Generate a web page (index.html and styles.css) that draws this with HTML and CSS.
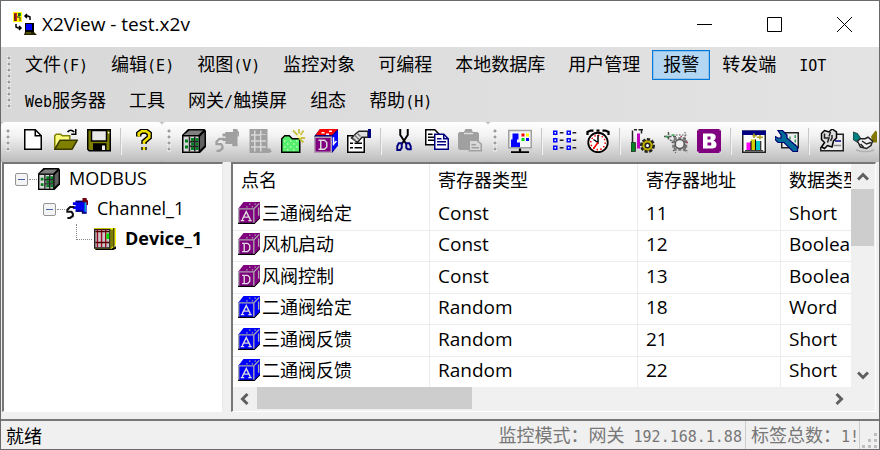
FILE: index.html
```html
<!DOCTYPE html>
<html lang="zh-CN">
<head>
  <meta charset="UTF-8">
  <meta name="viewport" content="width=device-width, initial-scale=1">
  <title>X2View - test.x2v</title>
  <link rel="stylesheet" href="styles.css">
</head>
<body>
  <!-- shared icons, all on a 16x16 grid -->
  <svg class="sprites" aria-hidden="true">
    <symbol id="i-server" viewBox="0 0 16 16">
      <path d="M0 4L4 0H15L16 1V12L12 16H0Z" fill="#000"/>
      <path d="M1 4L5 1H14L11 4Z" fill="#808080"/>
      <path d="M12 5L15 2V11L12 14Z" fill="#606060"/>
      <path d="M1 5H11V15H1Z" fill="#d8d8d8"/>
      <path d="M2 7h2v2H2zM2 11h2v2H2zM6 6h2v2H6zM9 6h2v2H9zM6 9h2v2H6zM9 9h2v2H9zM6 12h2v2H6zM9 12h2v2H9z" fill="#008020"/>
      <path d="M5 5V15M8.500 5V15M5 8.500H11M5 11.500H11" stroke="#222" stroke-width="1"/>
    </symbol>
    <symbol id="i-channel" viewBox="0 0 16 16">
      <path d="M7 2H13V1H15V11H12V10H7V8H5V6H7V5H5V3H7Z" fill="currentColor"/>
      <path d="M7 2.500H13M7 9.500H12V11H15" fill="none" stroke="var(--edge)"/>
      <path d="M6 6.500H3L1 8.500V10H4L5 11.500V13L3 14.500H1" fill="none" stroke="var(--wire)" stroke-width="1.500"/>
      <path d="M14 3V10" stroke="var(--trim)" stroke-width="1"/>
      <path d="M12 0h3v1l1 1v3h-1V3h-3z" fill="var(--cap)"/>
    </symbol>
    <symbol id="i-cube-a" viewBox="0 0 16 16">
      <path d="M0 5L4 0H16V11L12 16H0Z" fill="currentColor"/>
      <path d="M0 15H12L16 11V12L12 16H0Z" fill="#000"/>
      <path d="M.5 5H11.500V15M11.500 5L15.500 1M.5 5V15M15 4V10M6 3.500h1M8 1.500h1M10 3.500h1M12 1.500h1" fill="none" stroke="#a8a8a8"/>
      <path d="M2 13.500H4.500M7.500 13.500H10M3 13L6 7L9 13M4.500 11H7.500" fill="none" stroke="#ddd"/>
    </symbol>
    <symbol id="i-cube-d" viewBox="0 0 16 16">
      <path d="M0 5L4 0H16V11L12 16H0Z" fill="currentColor"/>
      <path d="M0 15H12L16 11V12L12 16H0Z" fill="#000"/>
      <path d="M.5 5H11.500V15M11.500 5L15.500 1M.5 5V15M15 4V10M6 3.500h1M8 1.500h1M10 3.500h1M12 1.500h1" fill="none" stroke="#a8a8a8"/>
      <path d="M3 7.500H7L8.500 9V12L7 13.500H3M4.500 7.500V13.500" fill="none" stroke="#ddd"/>
    </symbol>
  </svg>

  <div class="window">
    <header class="titlebar">
      <svg class="app-icon" viewBox="0 0 24 24" aria-hidden="true">
        <path d="M0 0H9V10H0Z" fill="#ffff00"/>
        <path d="M1 1H4V9H1Z" fill="#d02020"/><path d="M5 1H8V4H5Z" fill="#20a020"/>
        <path d="M2 2V9M4 5H7V9M6 1V4" fill="none" stroke="#222"/>
        <path d="M17 8V5L15 4H12M14 2L12 4L14 6M3 12V15L5 16H8M6 14L8 16L6 18" fill="none" stroke="#000" stroke-width="1.500"/>
        <path d="M12 11H21V20H12Z" fill="#000"/><path d="M13 12H19V18H13Z" fill="#0000ff"/>
        <path d="M12 20H21L24 23H11Z" fill="#222200"/><path d="M13 21H18" stroke="#808000"/>
      </svg>
      <h1>X2View - test.x2v</h1>
      <div class="caption-buttons">
        <button type="button" aria-label="最小化"><svg viewBox="0 0 15 15"><path d="M0 7.500H15"/></svg></button>
        <button type="button" aria-label="最大化"><svg viewBox="0 0 15 15"><path d="M.5 .5H14.500V14.500H.5Z"/></svg></button>
        <button type="button" aria-label="关闭"><svg viewBox="0 0 15 15"><path d="M0 0L15 15M15 0L0 15"/></svg></button>
      </div>
    </header>

    <nav class="menubar">
      <span class="grip"></span>
      <div class="menus">
        <div class="menu-row">
          <button type="button">文件<span class="half">(F)</span></button>
          <button type="button">编辑<span class="half">(E)</span></button>
          <button type="button">视图<span class="half">(V)</span></button>
          <button type="button">监控对象</button>
          <button type="button">可编程</button>
          <button type="button">本地数据库</button>
          <button type="button">用户管理</button>
          <button type="button" class="active">报警</button>
          <button type="button">转发端</button>
          <button type="button"><span class="half">IOT</span></button>
        </div>
        <div class="menu-row">
          <button type="button"><span class="half">Web</span>服务器</button>
          <button type="button">工具</button>
          <button type="button">网关<span class="half">/</span>触摸屏</button>
          <button type="button">组态</button>
          <button type="button">帮助<span class="half">(H)</span></button>
        </div>
      </div>
    </nav>

    <div class="toolbars">
      <div class="toolbar">
        <span class="grip"></span>
        <button type="button" aria-label="新建">
          <svg viewBox="0 0 16 16"><path d="M2.500 .5H9.500L13.500 4.500V13.500H2.500Z" fill="#fff" stroke="#000"/><path d="M9.500 .5V4.500H13.500" fill="none" stroke="#000"/></svg>
        </button>
        <button type="button" aria-label="打开">
          <svg viewBox="0 0 16 16"><path d="M.5 13V4.500L1.500 3.500H4.500L5.500 4.500H10.500V7" fill="#ffff80" stroke="#808000"/><path d="M.5 13.500L4 7.500H15.500L12 13.500Z" fill="#808000" stroke="#3a3a00"/><path d="M9 2Q11-.5 13.500 2M14.500 0V3.500H11.500" fill="none" stroke="#000"/></svg>
        </button>
        <button type="button" aria-label="保存">
          <svg viewBox="0 0 16 16"><path d="M.5 .5H15.500V14.500H1.500L.5 13.500Z" fill="#808000" stroke="#000"/><path d="M3 1H13V8H3Z" fill="#e8e8e8" stroke="#000"/><path d="M4 9.500H13V14.500H4Z" fill="#000"/><path d="M10 11h2v3h-2z" fill="#eee"/><path d="M14 2h1v1h-1z" fill="#fff"/></svg>
        </button>
        <span class="separator"></span>
        <button type="button" aria-label="帮助">
          <svg viewBox="0 0 16 16"><path d="M4.500 5V3L6.500 1.500H9.500L11.500 3V5.500L8 8.500V10M8 12V14" fill="none" stroke="#000" stroke-width="3.600"/><path d="M4.500 5V3L6.500 1.500H9.500L11.500 3V5.500L8 8.500V10M8 12V14" fill="none" stroke="#f0e000" stroke-width="1.800"/></svg>
        </button>
      </div>

      <div class="toolbar">
        <span class="grip"></span>
        <button type="button" aria-label="工程"><svg><use href="#i-server"/></svg></button>
        <button type="button" aria-label="通道" disabled><svg class="channel-off"><use href="#i-channel"/></svg></button>
        <button type="button" aria-label="设备" disabled>
          <svg viewBox="0 0 16 16"><path d="M1 0H13V13H15V14L16 15L14 16H1Z" fill="#a0a0a0"/><path d="M2 4H12M2 8H12M2 12H12M4.500 1V15M8.500 1V15" stroke="#d8d8d8"/><path d="M9 4h3v3H9z" fill="#a0a0a0"/></svg>
        </button>
        <button type="button" aria-label="新建组">
          <svg viewBox="0 0 16 16"><path d="M.5 15.500V6.500L2.500 4.500H5.500L7.500 6.500H12.500V15.500Z" fill="#55ef6c" stroke="#000"/><path d="M2 8h1M4 10h1M6 8h1M8 10h1M10 8h1M2 12h1M4 14h1M6 12h1M8 14h1M10 12h1" stroke="#b8ffc0"/><path d="M12 0V3M8 1L11 4M15 1L13 4M13 6H16M12 6L15 9" stroke="#c8c040" stroke-width="1.200"/><path d="M11 4h2v2h-2z" fill="#ffff90"/></svg>
        </button>
        <button type="button" aria-label="新建点">
          <svg viewBox="0 0 16 16"><path d="M0 5L4 0H16V11L12 16H0Z" fill="#000080"/><path d="M1 4L4 0H16L12 4Z" fill="#ff0000"/><path d="M5 2h2v1H5zM10 1h2v1h-2zM8 3h2v1H8z" fill="#fff"/><path d="M12 5L16 1V11L12 15Z" fill="#0000ff"/><path d="M13 5.500V11M13 10L15 8" stroke="#fff"/><path d="M.5 5.500H11.500V15.500H.5Z" fill="#800080" stroke="#b0a0b0"/><path d="M3 7.500H7L8.500 9V12L7 13.500H3M4.500 7.500V13.500" fill="none" stroke="#ddd"/></svg>
        </button>
        <button type="button" aria-label="属性">
          <svg viewBox="0 0 16 16"><path d="M.5 4.500H11.500V15.500H.5Z" fill="#fff" stroke="#000"/><path d="M2 9.500H4M5 9.500H10M2 12.500H4M5 12.500H10" stroke="#000"/><path d="M3 6L6 3L8 1.500H14V5.500H10L7 9L3 6Z" fill="#e0e0e0" stroke="#222"/><path d="M5 4L8 7M4 6L6 8M7 3L9 5" stroke="#777"/><path d="M14 0H16V6H14Z" fill="#000080"/></svg>
        </button>
        <span class="separator"></span>
        <button type="button" aria-label="剪切">
          <svg viewBox="0 0 16 16"><path d="M5.500 0V4L9.500 10M10.500 0V4L6.500 10" fill="none" stroke="#000" stroke-width="1.300"/><path d="M4.500 9.500H6.500V12.500L5.500 14H3.500L3.500 11.500ZM9.500 9.500H11.500L12.500 11.500V13.500H10.500L9.500 12.500Z" fill="none" stroke="#000080" stroke-width="1.300"/></svg>
        </button>
        <button type="button" aria-label="复制">
          <svg viewBox="0 0 16 16"><path d="M.5 .5H6.500L9.500 3.500V10.500H.5Z" fill="#fff" stroke="#000"/><path d="M2 3.500H5M2 5.500H7M2 7.500H7" stroke="#000"/><path d="M6.500 3.500H12.500L15.500 6.500V13.500H6.500Z" fill="#fff" stroke="#000080"/><path d="M12.500 3.500V6.500H15.500M8 6.500H11M8 8.500H14M8 10.500H14" fill="none" stroke="#000080"/></svg>
        </button>
        <button type="button" aria-label="粘贴" disabled>
          <svg viewBox="0 0 16 16"><path d="M0 3L1 2H4L5 0H9L10 2H13L14 3V14H1L0 13Z" fill="#a0a0a0"/><path d="M4 3H10" stroke="#ddd"/><path d="M7.500 7.500H12.500L15.500 10V14.500H7.500Z" fill="#d8d8d8" stroke="#a0a0a0"/><path d="M9 10.500H12M9 12.500H14" stroke="#a0a0a0"/></svg>
        </button>
      </div>

      <div class="toolbar">
        <span class="grip"></span>
        <button type="button" aria-label="监视">
          <svg viewBox="0 0 16 16"><path d="M.5 1H15.500V12.500H.5Z" fill="#f4f4f4" stroke="#a0a0a0"/><path d="M3 3H7V7H6V9H8V12H2V7H3Z" fill="#0000ff"/><path d="M9 3h2v2H9z" fill="#ff0000"/><path d="M12 3h2v2h-2z" fill="#ffff00"/><path d="M9 6h2v2H9z" fill="#00e000"/><path d="M12 6h2v2h-2z" fill="#0000ff"/><path d="M8 13V15M2 15.500H14" stroke="#000" stroke-width="1.500"/></svg>
        </button>
        <span class="separator"></span>
        <button type="button" aria-label="列表">
          <svg viewBox="0 0 16 16"><path d="M.5 1.500h2v2h-2zM9.500 1.500h2v2h-2zM.5 6.500h2v2h-2zM9.500 6.500h2v2h-2zM.5 11.500h2v2h-2zM9.500 11.500h2v2h-2z" fill="#fff" stroke="#0000ff"/><path d="M4.500 2.500H7M13 2.500H15.500M4.500 7.500H7M13 7.500H15.500M4.500 12.500H7M13 12.500H15.500" stroke="#222"/></svg>
        </button>
        <button type="button" aria-label="定时">
          <svg viewBox="0 0 16 16"><path d="M1 4V2L3 1H5M15 4V2L13 1H11M7 1H9" fill="none" stroke="#000" stroke-width="1.500"/><circle cx="8" cy="9" r="6.500" fill="#fff" stroke="#000" stroke-width="1.200"/><circle cx="8" cy="9" r="4.800" fill="none" stroke="#ff0000" stroke-dasharray="1 1.500"/><path d="M8 4V9L5 7" fill="none" stroke="#000"/><path d="M8 9L5 13" stroke="#f00"/></svg>
        </button>
        <span class="separator"></span>
        <button type="button" aria-label="配置">
          <svg viewBox="0 0 16 16"><path d="M2 .5H4M5 .5H8M7 0V3M1 1V9" stroke="#222"/><path d="M0 9H3V15H0Z" fill="#008020" stroke="#222" stroke-width=".5"/><path d="M4 3H6V13H4Z" fill="#c000c0"/><circle cx="11" cy="11" r="4" fill="#808000" stroke="#222" stroke-width="2" stroke-dasharray="2 1"/><circle cx="11" cy="11" r="3.300" fill="#c0b000"/><circle cx="11" cy="11" r="1.500" fill="#fff" stroke="#222"/></svg>
        </button>
        <button type="button" aria-label="模拟">
          <svg viewBox="0 0 16 16"><path d="M0 5H8M3 2V8M2 5L5 8" stroke="#555" stroke-dasharray="2 1"/><path d="M1 5h2M5 4h2" stroke="#30a050"/><path d="M6.500 6.500H14.500V13.500H6.500Z" fill="#ddd" stroke="#777" stroke-width="2" stroke-dasharray="2 1"/><circle cx="10.500" cy="10" r="3" fill="#eee" stroke="#555"/><path d="M8 4H16M14 2V15M5 9H7M6 14L8 16M15 14L16 16" stroke="#555" stroke-width=".7" stroke-dasharray="1 1"/><path d="M11 5h1M15 9h1" stroke="#b04060"/></svg>
        </button>
        <button type="button" aria-label="BACnet">
          <svg viewBox="0 0 16 16"><path d="M0 0H16V16H0Z" fill="#800080"/><path d="M4 3H9.500Q12.500 3 12.500 5.500Q12.500 7 11 7.700Q13 8.500 13 10.500Q13 13 10 13H4ZM7 5V7H9V5ZM7 9V11H9.500V9Z" fill="#fff" fill-rule="evenodd"/><path d="M0 0h1v1H0zM15 0h1v1h-1zM0 15h1v1H0zM15 15h1v1h-1z" fill="#ddd"/></svg>
        </button>
        <span class="separator"></span>
        <button type="button" aria-label="图表">
          <svg viewBox="0 0 16 16"><path d="M.5 1.500H15.500V15.500H.5Z" fill="#fff" stroke="#222"/><path d="M0 1H16V4H0Z" fill="#000080"/><path d="M3 9H6V14H3Z" fill="#ff00ff"/><path d="M6 7H9V14H6Z" fill="#d8d000"/><path d="M9 8H12V14H9Z" fill="#00c8c8"/><path d="M2 14.500H14M6 8V14M9 7V14M12.500 8V14" stroke="#000" stroke-width=".7"/><path d="M8 3V6M7 4.500H10M12 4V7M10 5.500H14" stroke="#b0a020"/></svg>
        </button>
        <button type="button" aria-label="工具">
          <svg viewBox="0 0 16 16"><path d="M4.500 2.500H15.500V12.500H4.500Z" fill="#eee" stroke="#222"/><path d="M10 5V8M13.500 4V11" stroke="#40a060" stroke-dasharray="2 1"/><path d="M2 1H5L8 4V6L15 12V15H12L6 9H2L0 7V5L2 6H4V4Z" fill="#006a98" stroke="#000070" stroke-width=".8"/></svg>
        </button>
        <span class="separator"></span>
        <button type="button" aria-label="用户">
          <svg viewBox="0 0 16 16"><path d="M5 3.500H15.500V14.500H.5V12" fill="#eee" stroke="#222"/><path d="M1 12L3 9L1 7V3L3 1L6 2L8 0L11 2V6L9 8L8 12L5 11L3 13Z" fill="#ddd" stroke="#000"/><path d="M3 3V6H6L5 9M7 2L6 5M8 4V6L7 8" fill="none" stroke="#222"/><path d="M10 8H14" stroke="#000080"/><path d="M9 11H14" stroke="#888"/></svg>
        </button>
        <button type="button" aria-label="协议">
          <svg viewBox="0 0 16 16"><path d="M0 2L3 3L5 6L3 9L0 7Z" fill="#008080" stroke="#222" stroke-width=".5"/><path d="M12 5L15 1L16 2V9H13Z" fill="#807800"/><path d="M3 8L5 6.500H8L10 5.500L13 8L12 11L9 13L5 12Z" fill="#f0f0f0" stroke="#222"/><path d="M6 8L9 10L12 9M5 10L7 12" fill="none" stroke="#222"/><path d="M2 14L6 15H11L14 14" fill="none" stroke="#b0b0b0"/></svg>
        </button>
      </div>
    </div>

    <main class="workspace">
      <ul class="tree">
        <li class="node">
          <button type="button" class="toggle" aria-label="折叠 MODBUS"></button>
          <span class="branch"></span>
          <svg class="icon"><use href="#i-server"/></svg>
          <span>MODBUS</span>
        </li>
        <li class="node level-1">
          <button type="button" class="toggle" aria-label="折叠 Channel_1"></button>
          <span class="branch"></span>
          <svg class="icon channel-on"><use href="#i-channel"/></svg>
          <span>Channel_1</span>
        </li>
        <li class="node level-2 selected">
          <span class="elbow"></span>
          <svg class="icon" viewBox="0 0 16 16">
            <path d="M0 0H15V14L16 13V15L14 16H1Z" fill="#000"/><path d="M0 0H14V14H15V0H16V12L13 15H0Z" fill="#ffff00"/>
            <path d="M12 1H14V13L12 15Z" fill="#808000"/><path d="M.5 1H11.500V14.500H.5Z" fill="#c8c8c8" stroke="#222"/>
            <path d="M2.500 1V14M5.500 1V14M8.500 1V14" stroke="#a00020"/><path d="M1 2.500H11M1 10.500H11" stroke="#500"/><path d="M9 4h2v4H9z" fill="#00e000"/>
          </svg>
          <span>Device_1</span>
        </li>
      </ul>

      <section class="list">
        <div class="list-view">
          <table>
            <colgroup><col class="col-name"><col class="col-register"><col class="col-address"><col class="col-data"></colgroup>
            <thead>
              <tr><th>点名</th><th>寄存器类型</th><th>寄存器地址</th><th>数据类型</th></tr>
            </thead>
            <tbody>
              <tr><td class="name"><svg class="icon virtual"><use href="#i-cube-a"/></svg>三通阀给定</td><td>Const</td><td>11</td><td>Short</td></tr>
              <tr><td class="name"><svg class="icon virtual"><use href="#i-cube-d"/></svg>风机启动</td><td>Const</td><td>12</td><td>Boolean</td></tr>
              <tr><td class="name"><svg class="icon virtual"><use href="#i-cube-d"/></svg>风阀控制</td><td>Const</td><td>13</td><td>Boolean</td></tr>
              <tr><td class="name"><svg class="icon analog"><use href="#i-cube-a"/></svg>二通阀给定</td><td>Random</td><td>18</td><td>Word</td></tr>
              <tr><td class="name"><svg class="icon analog"><use href="#i-cube-a"/></svg>三通阀反馈</td><td>Random</td><td>21</td><td>Short</td></tr>
              <tr><td class="name"><svg class="icon analog"><use href="#i-cube-a"/></svg>二通阀反馈</td><td>Random</td><td>22</td><td>Short</td></tr>
            </tbody>
          </table>
        </div>
        <div class="scrollbar vertical">
          <button type="button" aria-label="向上滚动"><svg viewBox="0 0 12 12"><path d="M1 8.500L6 3.500L11 8.500"/></svg></button>
          <span class="thumb"></span>
          <button type="button" aria-label="向下滚动"><svg viewBox="0 0 12 12"><path d="M1 3.500L6 8.500L11 3.500"/></svg></button>
        </div>
        <div class="scrollbar horizontal">
          <button type="button" aria-label="向左滚动"><svg viewBox="0 0 12 12"><path d="M8.500 1L3.500 6L8.500 11"/></svg></button>
          <span class="thumb"></span>
          <button type="button" aria-label="向右滚动"><svg viewBox="0 0 12 12"><path d="M3.500 1L8.500 6L3.500 11"/></svg></button>
        </div>
      </section>
    </main>

    <footer class="statusbar">
      <span class="ready">就绪</span>
      <span class="pane mode">监控模式：网关<span class="half"> 192.168.1.88</span></span>
      <span class="pane total">标签总数：<span class="half">1!</span></span>
      <svg class="size-grip" viewBox="0 0 16 16" aria-hidden="true"><path d="M12 0h3v3h-3zM6 6h3v3H6zM12 6h3v3h-3zM0 12h3v3H0zM6 12h3v3H6zM12 12h3v3h-3z" fill="#bfbfbf"/></svg>
    </footer>
  </div>
</body>
</html>
```
FILE: styles.css
```css
* {
  box-sizing: border-box;
}

body {
  margin: 0;
  background: #f0f0f0;
  color: #000;
  font-family: "Open Sans", "Noto Sans CJK SC", sans-serif;
  font-size: 18px;
}

button {
  margin: 0;
  padding: 0;
  border: 0;
  background: none;
  color: inherit;
  font: inherit;
}

h1 {
  margin: 0;
  font-size: 19px;
  font-weight: normal;
}

.sprites {
  display: none;
}

.window {
  display: flex;
  flex-direction: column;
  height: 100vh;
  border: 1px solid #6b696b;
  overflow: hidden;
}

/* title bar */
.titlebar {
  display: flex;
  align-items: center;
  flex: none;
  height: 46px;
  padding-left: 12px;
  background: #fff;
}

.app-icon {
  width: 24px;
  height: 24px;
  margin-right: 5px;
}

.caption-buttons {
  display: flex;
  margin-left: auto;
}

.caption-buttons button {
  width: 70px;
  height: 46px;
}

.caption-buttons svg {
  display: block;
  width: 15px;
  height: 15px;
  margin: auto;
  fill: none;
  stroke: #000;
}

/* menu */
.menubar,
.menu-row button,
.statusbar {
  font-family: "Noto Sans CJK SC", sans-serif;
}

.half {
  font-family: "DejaVu Sans Mono", monospace;
  font-size: 15px;
  white-space: pre;
}

.grip {
  flex: none;
  width: 4px;
  height: 24px;
  background: radial-gradient(circle at 2px 2px, #9c9c9c 1px, #f8f8f8 2px, transparent 3px) 0 0 / 4px 6px;
}

.menubar {
  display: flex;
  flex: none;
  padding: 3px 0 6px 6px;
  background: linear-gradient(90deg, #d8d8d8, #e3e3e3);
}

.menubar .grip {
  height: 54px;
  margin-top: 6px;
}

.menus {
  display: flex;
  flex-direction: column;
  gap: 6px;
  padding-left: 3px;
}

.menu-row {
  display: flex;
  gap: 1px;
}

.menu-row button {
  height: 30px;
  padding: 0 10px 4px;
  border: 1px solid transparent;
  line-height: 24px;
  white-space: nowrap;
}

.menu-row .active {
  border-color: #0078d7;
  background: #b3d7f3;
  outline: 1px solid #8fc3ee;
  outline-offset: -2px;
}

/* toolbars */
.toolbars {
  display: flex;
  flex: none;
  height: 40px;
  background: #b8b8b8;
  overflow: hidden;
}

.toolbar {
  display: flex;
  align-items: center;
  flex: none;
  padding: 0 2px 2px 5px;
  border-radius: 4px;
  background: linear-gradient(#fff, #f2f2f2 35%, #bcbcbc);
}

.toolbar:last-child {
  flex: 1 0 auto;
}

.toolbar .grip {
  margin-right: 6px;
}

.toolbar button {
  width: 33px;
  height: 32px;
}

.toolbar svg {
  display: block;
  width: 24px;
  height: 24px;
  margin: auto;
}

.separator {
  width: 2px;
  height: 27px;
  margin: 0 5px;
  background: linear-gradient(90deg, #c8c8c8 50%, #f4f4f4 50%);
}

.channel-off {
  color: #a0a0a0;
  --edge: #a0a0a0;
  --wire: #a0a0a0;
  --trim: #a0a0a0;
  --cap: #a0a0a0;
}

.channel-on {
  color: #0000ee;
  --edge: #000060;
  --wire: #111;
  --trim: #00b8c8;
  --cap: #700010;
}

/* tree and list */
.workspace {
  display: flex;
  flex: 1;
  min-height: 0;
  gap: 8px;
  padding: 0 3px 7px 1px;
}

.tree {
  flex: none;
  width: 221px;
  margin: 0;
  padding: 0 0 0 11px;
  border: 2px solid #777;
  border-right: 1px solid #e8e8e8;
  border-bottom: 1px solid #fff;
  background: #fff;
  list-style: none;
}

.icon {
  flex: none;
  width: 22px;
  height: 22px;
}

.node {
  display: flex;
  align-items: center;
  height: 30px;
  line-height: 26px;
}

.node > span:last-child {
  padding-bottom: 3px;
}

.node .icon {
  margin-right: 9px;
}

.level-1 {
  padding-left: 28px;
}

.level-2 {
  padding-left: 61px;
}

.selected {
  font-weight: bold;
}

.toggle {
  width: 13px;
  height: 13px;
  border: 1px solid #959595;
  border-radius: 2px;
  background: linear-gradient(#4b63a7, #4b63a7) center / 7px 1px no-repeat, #f4f4f4;
}

.branch {
  width: 8px;
  margin: 0 1px;
  border-top: 1px dotted #888;
}

.elbow {
  width: 16px;
  height: 16px;
  margin: 0 2px 14px 0;
  border: dotted #888;
  border-width: 0 0 1px 1px;
}

.list {
  display: grid;
  flex: 1;
  grid-template-columns: minmax(0, 1fr) 24px;
  grid-template-rows: minmax(0, 1fr) 24px;
  min-width: 0;
  border: 2px solid #777;
  border-right: 1px solid #fff;
  border-bottom: 1px solid #fff;
  background: #f0f0f0;
}

.list-view {
  background: #fff;
  overflow: hidden;
}

table {
  width: 690px;
  border-collapse: separate;
  border-spacing: 0;
  table-layout: fixed;
}

.col-name {
  width: 197px;
}

.col-register {
  width: 208px;
}

.col-address {
  width: 143px;
}

th,
td {
  padding: 0 0 4px 8px;
  border-right: 1px solid #ececec;
  line-height: 24px;
  text-align: left;
  white-space: nowrap;
}

th {
  height: 35px;
  font-weight: normal;
}

td {
  height: 32px;
  border-bottom: 1px solid #ececec;
  font-size: 19px;
}

tr:nth-child(even) td {
  height: 31px;
}

td.name {
  padding-left: 5px;
  font-size: 18px;
}

.name .icon {
  margin-right: 2px;
  vertical-align: -4px;
}

.virtual {
  color: #800080;
}

.analog {
  color: #0000ff;
}

.scrollbar {
  display: flex;
}

.scrollbar svg {
  display: block;
  width: 12px;
  height: 12px;
  margin: auto;
  fill: none;
  stroke: #606060;
  stroke-width: 3;
}

.scrollbar button {
  flex: none;
  width: 24px;
  height: 25px;
}

.scrollbar .thumb {
  background: #cdcdcd;
}

.vertical {
  flex-direction: column;
}

.vertical .thumb {
  width: 23px;
  height: 57px;
}

.vertical button:last-child {
  margin-top: auto;
}

.horizontal .thumb {
  width: 215px;
  height: 22px;
}

.horizontal button {
  height: 24px;
}

.horizontal button:last-child {
  margin-left: auto;
}

/* status bar */
.statusbar {
  display: flex;
  align-items: center;
  flex: none;
  height: 30px;
  padding-left: 5px;
  border-top: 2px solid #777;
  background: #f0f0f0;
  color: #777;
  line-height: 26px;
  white-space: nowrap;
}

.ready {
  margin-right: auto;
  color: #000;
}

.pane {
  padding-right: 3px;
  border-right: 1px solid #ccc;
}

.total {
  padding: 0 0 0 5px;
}

.size-grip {
  align-self: flex-end;
  width: 16px;
  height: 16px;
  margin: 0 1px 0 2px;
}
```
